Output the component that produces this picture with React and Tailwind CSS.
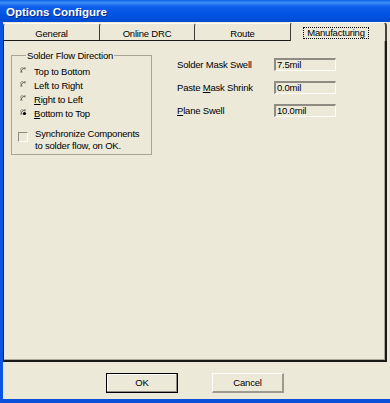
import React from "react";

function Radio({ checked }) {
  return (
    <svg width="9" height="9" viewBox="0 0 9 9" className="shrink-0">
      <path d="M1 6 A3.5 3.5 0 0 1 6 1" fill="none" stroke="#9a9890" strokeWidth="1" />
      <path d="M2 5.5 A2.5 2.5 0 0 1 5.5 2" fill="none" stroke="#55544e" strokeWidth="1" />
      {checked && <circle cx="4.5" cy="4.5" r="1.6" fill="#000" />}
    </svg>
  );
}

function U({ children }) {
  return <span className="underline underline-offset-[1px]">{children}</span>;
}

function Field({ value }) {
  return (
    <div className="w-[62px] h-[13px] border-t-2 border-l-2 border-t-[#8e8c82] border-l-[#8e8c82] border-b border-r border-b-[#fdfdfb] border-r-[#fdfdfb] bg-[#ece9d8] pl-[1px] flex items-center text-[9.5px] leading-none text-black">
      {value}
    </div>
  );
}

export default function App() {
  return (
    <div className="w-[390px] h-[403px] bg-[#ece9d8] flex flex-col overflow-hidden font-['Liberation_Sans',Arial,sans-serif] text-black tracking-[-0.2px]">
      {/* title bar */}
      <div className="h-[22px] shrink-0 bg-[linear-gradient(to_bottom,#0a5fe6_0%,#3d8df8_12%,#0e5eea_30%,#0054e3_65%,#004bd2_100%)] flex items-center pl-[6px] pt-[3px]">
        <span className="text-white font-bold text-[11.5px] tracking-normal [text-shadow:1px_1px_0_#0a2a8a]">Options Configure</span>
      </div>
      {/* body */}
      <div className="flex-1 flex flex-col border-l-[3px] border-l-[#0a55e2] border-b-[4px] border-b-[#0a50d8]">
        {/* tabs */}
        <div className="h-[18px] flex items-end shrink-0 mr-[3px] relative z-10">
          <div className="w-[96px] h-[17px] border-t border-l border-t-[#fbfbf8] border-l-[#3c3b36] rounded-tl-[3px] flex items-end justify-center text-[9.5px] leading-none pb-[2px]">
            General
          </div>
          <div className="w-[95px] h-[17px] border-t border-l border-t-[#fbfbf8] border-l-[#3c3b36] rounded-tl-[3px] flex items-end justify-center text-[9.5px] leading-none pb-[2px]">
            Online DRC
          </div>
          <div className="w-[96px] h-[17px] border-t border-l border-t-[#fbfbf8] border-l-[#3c3b36] rounded-tl-[3px] flex items-end justify-center text-[9.5px] leading-none pb-[2px]">
            Route
          </div>
          <div className="w-[97px] h-[19px] -mb-px bg-[#ece9d8] border-t border-l border-r-2 border-t-[#fbfbf8] border-l-[#3c3b36] border-r-[#45443e] rounded-tl-[3px] rounded-tr-[4px] flex items-end justify-center text-[9.5px] leading-none pb-[2px]">
            <span className="border border-dotted border-black px-[3px] h-[12px] flex items-center mr-[4px]">Manufacturing</span>
          </div>
        </div>
        {/* panel */}
        <div className="h-[322px] shrink-0 mr-[3px] border border-[#1a1a18] border-r-2 border-b-2 shadow-[inset_-1px_-1px_0_#aca899] flex items-start pt-[10px] pl-[7px] text-[9.5px] leading-none">
          <fieldset className="w-[141px] h-[104px] border border-[#a7a597] pl-[8px] pt-[4px] m-0">
            <legend className="ml-[6px] px-[1px] leading-none">Solder Flow Direction</legend>
            <div className="flex flex-col">
              {[
                ["Top to Bottom", false, null],
                ["Left to Right", false, null],
                ["Right to Left", false, "R"],
                ["Bottom to Top", true, "B"],
              ].map(([label, checked, u], i) => (
                <div key={i} className="h-[14px] flex items-center gap-[5px]">
                  <Radio checked={checked} />
                  <span>
                    {u ? (
                      <>
                        <U>{label[0]}</U>
                        {label.slice(1)}
                      </>
                    ) : (
                      label
                    )}
                  </span>
                </div>
              ))}
              <div className="flex items-start gap-[7px] mt-[8px] -ml-[2px]">
                <div className="w-[10px] h-[10px] mt-[3px] border-t border-l border-t-[#8e8c82] border-l-[#8e8c82] border-b border-r border-b-[#fdfdfb] border-r-[#fdfdfb] shrink-0" />
                <div className="flex flex-col leading-[12px] -mt-[1px]">
                  <span>Synchronize Components</span>
                  <span>to solder flow, on OK.</span>
                </div>
              </div>
            </div>
          </fieldset>
          <div className="ml-[25px] mt-[7px] grid grid-cols-[97px_62px] gap-y-[10px] items-center">
            <span>Solder Mask Swell</span>
            <Field value="7.5mil" />
            <span>
              Paste <U>M</U>ask Shrink
            </span>
            <Field value="0.0mil" />
            <span>
              <U>P</U>lane Swell
            </span>
            <Field value="10.0mil" />
          </div>
        </div>
        {/* buttons */}
        <div className="flex-1 flex items-start pt-[11px] pl-[103px] gap-[34px]">
          <button className="w-[72px] h-[20px] border border-black bg-[#ece9d8] shadow-[inset_-1px_-1px_0_#8e8c82,inset_1px_1px_0_#fff] flex items-center justify-center text-[9.5px] leading-none">
            OK
          </button>
          <button className="w-[72px] h-[20px] bg-[#ece9d8] border-r-2 border-b-2 border-r-[#9d9b8f] border-b-[#9d9b8f] border-t border-l border-t-[#fdfdfb] border-l-[#fdfdfb] flex items-center justify-center text-[9.5px] leading-none">
            Cancel
          </button>
        </div>
      </div>
    </div>
  );
}
